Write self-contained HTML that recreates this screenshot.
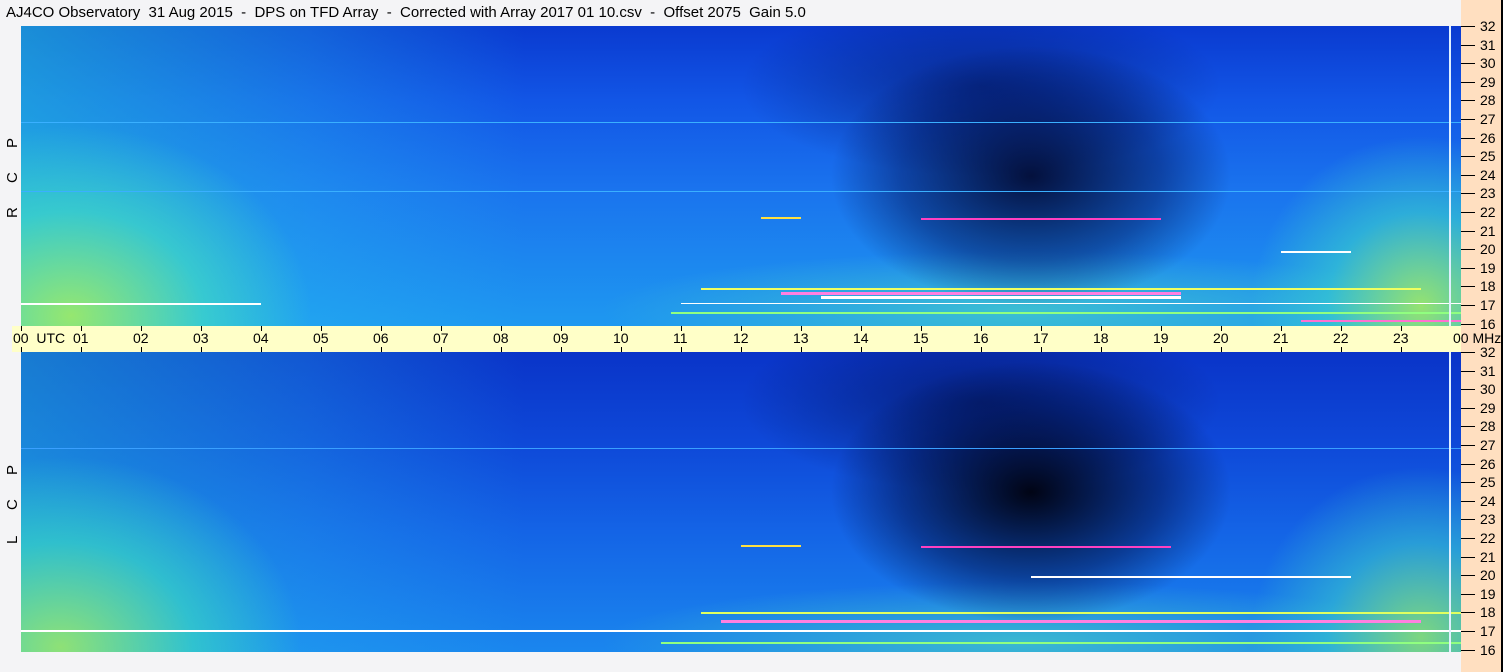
<!DOCTYPE html>
<html><head><meta charset="utf-8"><style>
*{margin:0;padding:0}
body{width:1503px;height:672px;background:#f4f4f6;position:relative;overflow:hidden;font-family:"Liberation Sans",sans-serif;color:#000}
.t{position:absolute;font-size:14px;white-space:nowrap}
.sp{position:absolute;left:21px;width:1440px;height:300px;overflow:hidden}
.ln{position:absolute;height:2px}
.rp{position:absolute;left:1461px;top:0;width:40px;height:672px;background:#ffdfc0;border-right:2px solid #000}
.tk{position:absolute;left:1461px;width:14px;height:1px;background:#000}
.ml{position:absolute;left:1480px;font-size:14px}
.bar{position:absolute;left:12px;top:326px;width:1449px;height:26px;background:#ffffc8}
.ht{position:absolute;width:1px;height:5px;background:#000}
.rl{position:absolute;left:4px;transform:rotate(-90deg);transform-origin:left top;font-size:15px}
</style></head><body>
<div class="t" style="left:6px;top:4px;font-size:15px">AJ4CO Observatory&nbsp; 31 Aug 2015&nbsp; -&nbsp; DPS on TFD Array&nbsp; -&nbsp; Corrected with Array 2017 01 10.csv&nbsp; -&nbsp; Offset 2075&nbsp; Gain 5.0</div>
<div class="rl" style="top:218px">R</div><div class="rl" style="top:183px">C</div><div class="rl" style="top:148px">P</div>
<div class="rl" style="top:544px">L</div><div class="rl" style="top:510px">C</div><div class="rl" style="top:475px">P</div>

<div class="sp" style="top:26px;background:
radial-gradient(ellipse 200px 130px at 1010px 150px,rgba(0,0,30,.85),rgba(0,15,80,.45) 65%,transparent 100%),
radial-gradient(ellipse 240px 90px at 960px 60px,rgba(0,10,70,.5),transparent 100%),
radial-gradient(ellipse 240px 190px at 50px 290px,rgba(170,240,90,.85),rgba(70,225,190,.6) 55%,transparent 100%),
radial-gradient(ellipse 170px 170px at 1400px 280px,rgba(170,240,90,.85),rgba(60,215,200,.55) 55%,transparent 100%),
radial-gradient(ellipse 420px 60px at 1000px 285px,rgba(80,220,190,.6),transparent 100%),
linear-gradient(90deg,rgba(40,210,220,.55) 0%,rgba(40,190,240,.3) 20%,transparent 35%),
linear-gradient(#0a3ad0 0%,#1256e6 25%,#1a74ee 55%,#1e98f0 100%)">
<div class="ln" style="top:96px;left:0;width:1440px;background:#3ab0ff;height:1px"></div>
<div class="ln" style="top:165px;left:0;width:1440px;background:#3ab0ff;height:1px"></div>
<div class="ln" style="top:192px;left:900px;width:240px;background:#ff40c0"></div>
<div class="ln" style="top:191px;left:740px;width:40px;background:#ffe040"></div>
<div class="ln" style="top:225px;left:1260px;width:70px;background:#fff"></div>
<div class="ln" style="top:262px;left:680px;width:720px;background:#f0ff60"></div>
<div class="ln" style="top:266px;left:760px;width:400px;background:#ff80e0;height:3px"></div>
<div class="ln" style="top:270px;left:800px;width:360px;background:#fff;height:3px"></div>
<div class="ln" style="top:277px;left:0;width:240px;background:#fff"></div>
<div class="ln" style="top:277px;left:660px;width:780px;background:#fff;height:1px"></div>
<div class="ln" style="top:286px;left:650px;width:790px;background:#90ff80"></div>
<div class="ln" style="top:294px;left:1280px;width:160px;background:#ff70d0"></div>
<div style="position:absolute;left:1428px;top:0;width:2px;height:300px;background:#e0f0ff"></div>
</div>

<div class="sp" style="top:352px;background:
radial-gradient(ellipse 200px 130px at 1010px 140px,rgba(0,0,10,.95),rgba(0,15,70,.5) 65%,transparent 100%),
radial-gradient(ellipse 240px 90px at 960px 50px,rgba(0,10,60,.55),transparent 100%),
radial-gradient(ellipse 240px 190px at 40px 295px,rgba(170,240,90,.8),rgba(60,220,190,.6) 55%,transparent 100%),
radial-gradient(ellipse 170px 170px at 1400px 285px,rgba(150,235,100,.8),rgba(60,210,200,.5) 55%,transparent 100%),
radial-gradient(ellipse 420px 60px at 1000px 290px,rgba(80,220,190,.6),transparent 100%),
linear-gradient(90deg,rgba(40,210,220,.45) 0%,rgba(40,190,240,.25) 20%,transparent 35%),
linear-gradient(#0a34c8 0%,#0e48d8 30%,#1464e6 60%,#1a86ee 100%)">
<div class="ln" style="top:96px;left:0;width:1440px;background:#3aa0ff;height:1px"></div>
<div class="ln" style="top:193px;left:720px;width:60px;background:#ffe040"></div>
<div class="ln" style="top:194px;left:900px;width:250px;background:#ff40c0"></div>
<div class="ln" style="top:224px;left:1010px;width:320px;background:#fff"></div>
<div class="ln" style="top:260px;left:680px;width:760px;background:#e0ff60"></div>
<div class="ln" style="top:268px;left:700px;width:700px;background:#ff80e0;height:3px"></div>
<div class="ln" style="top:278px;left:0;width:1440px;background:#fff;height:2px"></div>
<div class="ln" style="top:290px;left:640px;width:800px;background:#90ff80"></div>
<div style="position:absolute;left:1428px;top:0;width:2px;height:300px;background:#e0f0ff"></div>
</div>

<div class="bar"></div>
<div class="t" style="left:13px;top:330px">00&nbsp; UTC</div>
<div id="hl"></div>
<div class="rp"></div>
<div class="t" style="left:1453px;top:330px;z-index:2">00 MHz</div>
<div id="ax"></div>
<script>
var h='';
for(var i=0;i<=24;i++){var x=21+i*60;h+='<div class="ht" style="left:'+x+'px;top:326px"></div><div class="ht" style="left:'+x+'px;top:347px"></div>';
if(i>0&&i<24)h+='<div class="t" style="left:'+(x-8)+'px;top:330px">'+(i<10?'0':'')+i+'</div>';}
document.getElementById('hl').innerHTML=h;h='';
[26,352].forEach(function(t){for(var f=32;f>=16;f--){var y=Math.round(t+(32-f)*18.6);h+='<div class="tk" style="top:'+y+'px"></div><div class="ml" style="top:'+(y-8)+'px">'+f+'</div>';}});
document.getElementById('ax').innerHTML=h;
</script>
</body></html>
